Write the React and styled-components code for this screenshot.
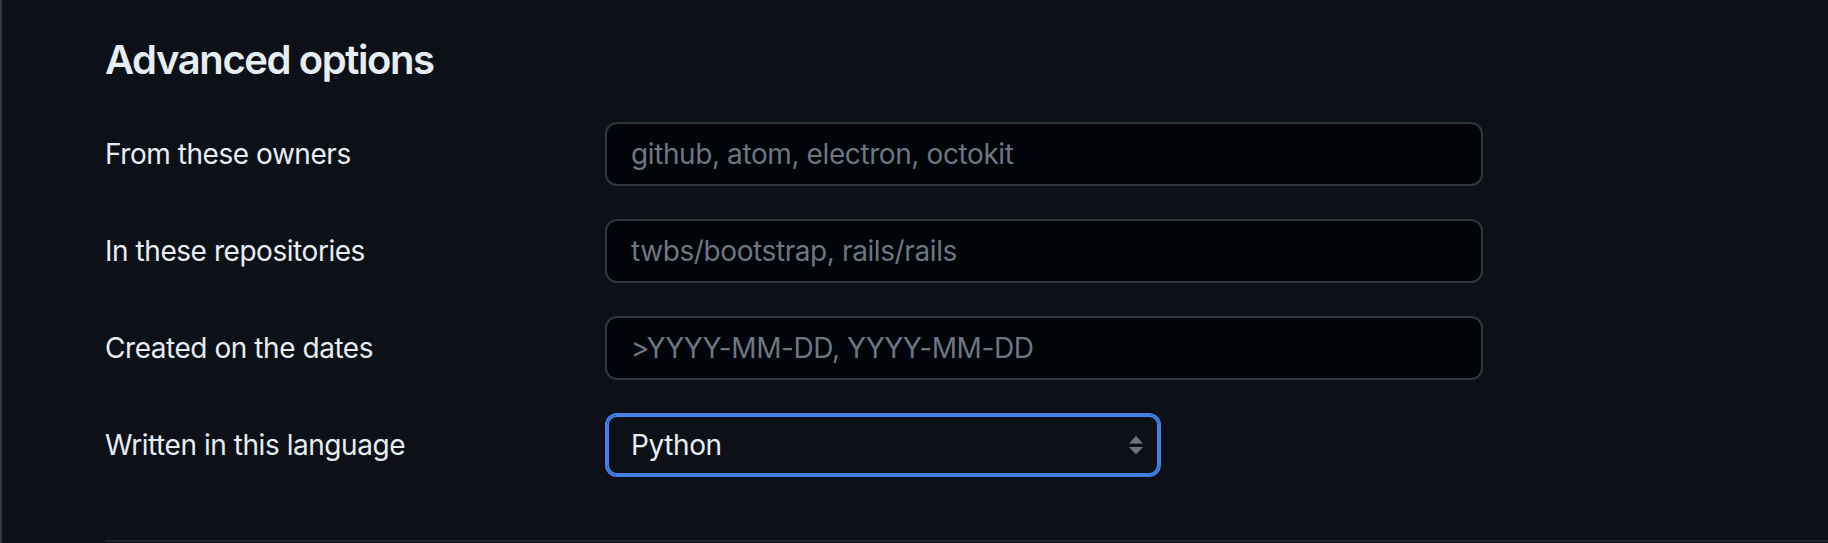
import React from "react";
import styled, { createGlobalStyle } from "styled-components";

const Global = createGlobalStyle`
  html, body {
    margin: 0;
    padding: 0;
    background: #0d1117;
  }
  body {
    font-family: Inter, "Liberation Sans", Arial, sans-serif;
    color: #e6edf3;
  }
  * { box-sizing: border-box; }
`;

const Page = styled.div`
  display: flex;
  min-height: 543px;
  border-left: 2px solid #30363d;
  background: #0d1117;
`;

const Content = styled.div`
  flex: 1;
  padding: 35px 0 0 103px;
  display: flex;
  flex-direction: column;
`;

const Heading = styled.h3`
  margin: 0 0 37px;
  font-size: 40px;
  line-height: 50px;
  font-weight: 600;
  letter-spacing: -1.4px;
  color: #e6edf3;
`;

const Form = styled.div`
  display: flex;
  flex-direction: column;
  gap: 33px;
`;

const Row = styled.label`
  display: grid;
  grid-template-columns: 500px auto;
  align-items: center;
`;

const Label = styled.span`
  font-size: 28px;
  line-height: 40px;
  letter-spacing: -0.45px;
  color: #e6edf3;
`;

const TextInput = styled.input`
  width: 878px;
  height: 64px;
  padding: 0 24px;
  font-family: inherit;
  font-size: 28px;
  letter-spacing: -0.4px;
  color: #e6edf3;
  background: #010409;
  border: 2px solid #30363d;
  border-radius: 12px;
  outline: none;
  &::placeholder {
    color: #6e7681;
    opacity: 1;
  }
`;

const SelectBox = styled.div`
  position: relative;
  width: 556px;
  height: 64px;
  display: flex;
  align-items: center;
  padding: 0 24px;
  background: #0d1117;
  border: 2px solid #4381e8;
  box-shadow: inset 0 0 0 2px #4381e8;
  border-radius: 12px;
  font-size: 28px;
  letter-spacing: -0.4px;
  color: #e6edf3;
`;

const Arrows = styled.svg`
  position: absolute;
  right: 16px;
  top: 50%;
  transform: translateY(-50%);
`;

const Divider = styled.div`
  margin-top: 63px;
  border-top: 2px solid #21262d;
`;

const fields = [
  { label: "From these owners", placeholder: "github, atom, electron, octokit" },
  { label: "In these repositories", placeholder: "twbs/bootstrap, rails/rails" },
  { label: "Created on the dates", placeholder: ">YYYY-MM-DD, YYYY-MM-DD" },
];

export default function App() {
  return (
    <>
      <Global />
      <Page>
        <Content>
          <Heading>Advanced options</Heading>
          <Form>
            {fields.map((f) => (
              <Row key={f.label}>
                <Label>{f.label}</Label>
                <TextInput type="text" placeholder={f.placeholder} />
              </Row>
            ))}
            <Row>
              <Label>Written in this language</Label>
              <SelectBox>
                Python
                <Arrows width="14" height="20" viewBox="0 0 14 20">
                  <path d="M7 1 L14 8.5 L0 8.5 Z" fill="#6e7681" />
                  <path d="M0 12 L14 12 L7 19.5 Z" fill="#6e7681" />
                </Arrows>
              </SelectBox>
            </Row>
          </Form>
          <Divider />
        </Content>
      </Page>
    </>
  );
}
